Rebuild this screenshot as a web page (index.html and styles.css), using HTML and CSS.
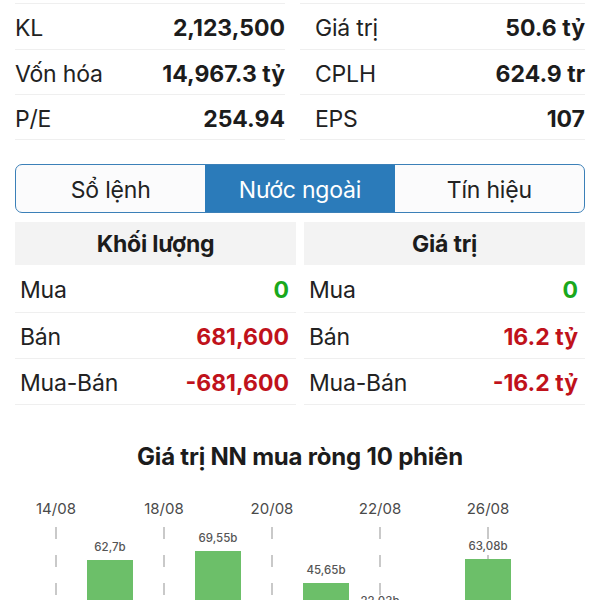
FILE: index.html
```html
<!DOCTYPE html>
<html lang="vi">
<head>
    <meta charset="UTF-8">
    <meta name="viewport" content="width=device-width, initial-scale=1.0">
    <title>Nước ngoài</title>
    <link rel="stylesheet" href="styles.css">
</head>
<body>
    <div class="page">
        <div class="stats">
            <div class="stat-col">
                <div class="stat-row"><span class="label">KL</span><span class="value">2,123,500</span></div>
                <div class="stat-row"><span class="label">Vốn hóa</span><span class="value">14,967.3 tỷ</span></div>
                <div class="stat-row"><span class="label">P/E</span><span class="value">254.94</span></div>
            </div>
            <div class="stat-col right">
                <div class="stat-row"><span class="label">Giá trị</span><span class="value">50.6 tỷ</span></div>
                <div class="stat-row"><span class="label">CPLH</span><span class="value">624.9 tr</span></div>
                <div class="stat-row"><span class="label">EPS</span><span class="value">107</span></div>
            </div>
        </div>

        <div class="segments">
            <div class="segment">Sổ lệnh</div>
            <div class="segment active">Nước ngoài</div>
            <div class="segment">Tín hiệu</div>
        </div>

        <div class="foreign">
            <div class="foreign-box">
                <div class="foreign-head">Khối lượng</div>
                <div class="foreign-row"><span class="label">Mua</span><span class="value up">0</span></div>
                <div class="foreign-row"><span class="label">Bán</span><span class="value down">681,600</span></div>
                <div class="foreign-row"><span class="label">Mua-Bán</span><span class="value down">-681,600</span></div>
            </div>
            <div class="foreign-box">
                <div class="foreign-head">Giá trị</div>
                <div class="foreign-row"><span class="label">Mua</span><span class="value up">0</span></div>
                <div class="foreign-row"><span class="label">Bán</span><span class="value down">16.2 tỷ</span></div>
                <div class="foreign-row"><span class="label">Mua-Bán</span><span class="value down">-16.2 tỷ</span></div>
            </div>
        </div>

        <div class="chart">
            <div class="chart-title">Giá trị NN mua ròng 10 phiên</div>
            <div class="plot">
                <div class="slot dated"><div class="date">14/08</div><div class="area"></div></div>
                <div class="slot"><div class="date"></div><div class="area"><div class="bar-label">62,7b</div><div class="bar" style="height: 84px"></div></div></div>
                <div class="slot dated"><div class="date">18/08</div><div class="area"></div></div>
                <div class="slot"><div class="date"></div><div class="area"><div class="bar-label">69,55b</div><div class="bar" style="height: 93px"></div></div></div>
                <div class="slot dated"><div class="date">20/08</div><div class="area"></div></div>
                <div class="slot"><div class="date"></div><div class="area"><div class="bar-label">45,65b</div><div class="bar" style="height: 61px"></div></div></div>
                <div class="slot dated"><div class="date">22/08</div><div class="area"><div class="bar-label">22,03b</div><div class="bar" style="height: 30px"></div></div></div>
                <div class="slot"><div class="date"></div><div class="area"></div></div>
                <div class="slot dated"><div class="date">26/08</div><div class="area"><div class="bar-label">63,08b</div><div class="bar" style="height: 85px"></div></div></div>
                <div class="slot"><div class="date"></div><div class="area"></div></div>
            </div>
        </div>
    </div>
</body>
</html>
```

FILE: styles.css
```css
/* CSS styles */
body {
    font-family: Inter, "Liberation Sans", Arial, sans-serif;
    background-color: #ffffff;
    color: #1c1c1c;
    margin: 0;
    padding: 0;
    overflow: hidden;
}

.page {
    padding: 3px 15px 0 15px;
}

/* top stats */
.stats {
    display: grid;
    grid-template-columns: 270px 285px;
    column-gap: 15px;
}

.stat-col {
    border-top: 1px solid #efefef;
}

.stat-row {
    display: flex;
    justify-content: space-between;
    align-items: center;
    height: 45px;
    padding-top: 3px;
    box-sizing: border-box;
    border-bottom: 1px solid #efefef;
    font-size: 23px;
    letter-spacing: -0.2px;
}

.stat-row:first-child {
    height: 46px;
}

.stat-col.right .stat-row {
    padding-left: 15px;
}

.label {
    color: #222222;
}

.value {
    font-weight: 700;
    letter-spacing: 0;
    color: #1c1c1c;
}

/* segmented control */
.segments {
    display: flex;
    margin-top: 24px;
    height: 47px;
    border: 1px solid #3b80b8;
    border-radius: 7px;
    overflow: hidden;
    background-color: #fbfbfc;
}

.segment {
    flex: 1;
    display: flex;
    align-items: center;
    justify-content: center;
    padding-top: 2px;
    font-size: 23px;
    letter-spacing: -0.2px;
    color: #222222;
}

.segment.active {
    background-color: #2b7bba;
    color: #ffffff;
}

/* foreign trading */
.foreign {
    display: grid;
    grid-template-columns: 1fr 1fr;
    column-gap: 8px;
    margin-top: 9px;
}

.foreign-head {
    height: 43px;
    display: flex;
    align-items: center;
    justify-content: center;
    background-color: #f3f3f3;
    font-size: 23px;
    font-weight: 700;
    letter-spacing: -0.2px;
    color: #1c1c1c;
}

.foreign-row {
    display: flex;
    justify-content: space-between;
    align-items: center;
    height: 46px;
    padding: 3px 7px 0 5px;
    box-sizing: border-box;
    border-bottom: 1px solid #efefef;
    font-size: 23px;
    letter-spacing: -0.2px;
}

.foreign-row:nth-child(2) {
    height: 48px;
}

.value.up {
    color: #19a81c;
}

.value.down {
    color: #c0121b;
}

/* chart */
.chart {
    margin-top: 37px;
}

.chart-title {
    text-align: center;
    font-size: 24px;
    font-weight: 700;
    letter-spacing: -0.2px;
    color: #1c1c1c;
}

.plot {
    display: flex;
    margin: 28px 0 0 14px;
    height: 145px;
}

.slot {
    width: 54px;
    display: flex;
    flex-direction: column;
    align-items: center;
}

.date {
    height: 26px;
    font-size: 15px;
    color: #4a4a4a;
    line-height: 20px;
}

.area {
    flex: 1;
    width: 100%;
    display: flex;
    flex-direction: column;
    align-items: center;
    justify-content: flex-end;
}

.slot.dated .area {
    background-image: repeating-linear-gradient(to bottom, #c9c9c9 0 12px, transparent 12px 28px);
    background-size: 2px 100%;
    background-position: center 2px;
    background-repeat: no-repeat;
}

.bar-label {
    font-size: 11.5px;
    font-weight: 500;
    color: #555555;
    margin-bottom: 6px;
}

.bar {
    width: 46px;
    background-color: #6cbf69;
}
```
